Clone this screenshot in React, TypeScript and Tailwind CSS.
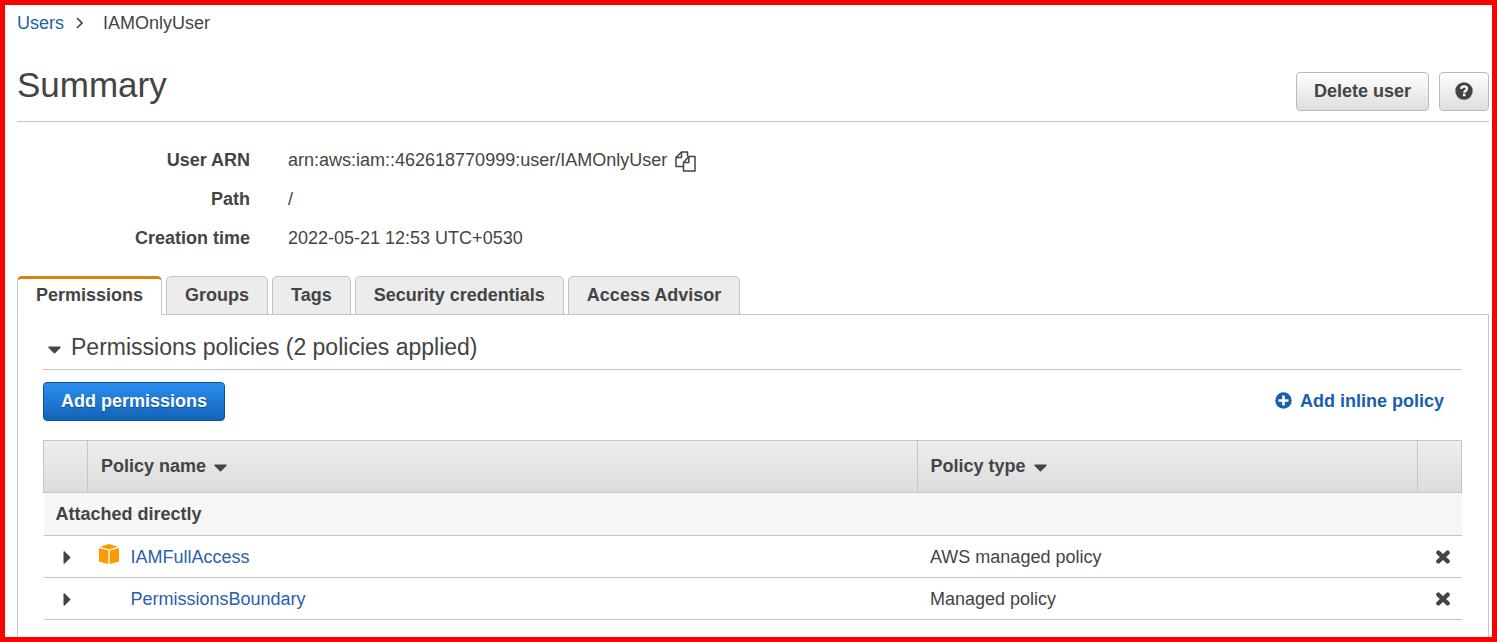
import { useState } from "react";

const TABS = ["Permissions", "Groups", "Tags", "Security credentials", "Access Advisor"];

const DETAILS = [
    { label: "User ARN", value: "arn:aws:iam::462618770999:user/IAMOnlyUser", copy: true },
    { label: "Path", value: "/" },
    { label: "Creation time", value: "2022-05-21 12:53 UTC+0530" },
];

const POLICIES = [
    { name: "IAMFullAccess", type: "AWS managed policy", aws: true },
    { name: "PermissionsBoundary", type: "Managed policy", aws: false },
];

function CaretDown() {
    return (
        <svg className="mt-[5px]" width="13" height="8" viewBox="0 0 13 8" fill="currentColor">
            <path d="M1 .5h11c.7 0 1 .7.5 1.2L7 7.2c-.3.3-.7.3-1 0L.5 1.7C0 1.2.3.5 1 .5z" />
        </svg>
    );
}

function CaretRight() {
    return (
        <svg width="8" height="13" viewBox="0 0 8 13" fill="currentColor">
            <path d="M.5 1v11c0 .7.7 1 1.2.5L7.2 7c.3-.3.3-.7 0-1L1.7.5C1.2 0 .5.3.5 1z" />
        </svg>
    );
}

function CopyIcon() {
    return (
        <svg width="21" height="21" viewBox="0 0 21 21" fill="none" stroke="currentColor" strokeWidth="1.5" strokeLinejoin="round">
            <path d="M8.5 15.5H1V6.5L6.5 1h6v4.5" />
            <path d="M6.5 1v5.500H1" />
            <path d="M8.5 11.5V20H20V5.5h-6.2z" fill="#fff" />
            <path d="M13.8 5.5v6H8.5" />
        </svg>
    );
}

function HelpIcon() {
    return (
        <svg width="18" height="18" viewBox="0 0 18 18">
            <circle cx="9" cy="9" r="8.7" fill="currentColor" />
            <path
                d="M6.1 6.9C6.4 5.2 7.5 4.4 9.1 4.4c1.6 0 2.8.9 2.8 2.3 0 2-2.6 2-2.6 4"
                fill="none"
                stroke="#fff"
                strokeWidth="2.4"
            />
            <rect x="8" y="11.7" width="2.5" height="2.5" fill="#fff" />
        </svg>
    );
}

function PlusIcon() {
    return (
        <svg width="17" height="17" viewBox="0 0 17 17">
            <circle cx="8.5" cy="8.5" r="8.2" fill="currentColor" />
            <path d="M8.5 3.5v10M3.5 8.5h10" stroke="#fff" strokeWidth="2.6" />
        </svg>
    );
}

function CubeIcon() {
    return (
        <svg width="20" height="20" viewBox="0 0 20 20" fill="#f90">
            <path d="M10 0l9 2.8L10 5.4 1 2.8z" />
            <path d="M0 4l9.3 2.6V20L0 17.4z" />
            <path d="M20 4l-9.3 2.6V20l9.3-2.6z" />
        </svg>
    );
}

function RemoveIcon() {
    return (
        <svg width="14" height="14" viewBox="0 0 14 14">
            <path d="M2.3 2.6l9.4 8.8M11.7 2.6l-9.4 8.8" stroke="currentColor" strokeWidth="4.2" strokeLinecap="round" />
        </svg>
    );
}

export default function App() {
    const [tab, setTab] = useState("Permissions");

    return (
        <div
            className="flex min-h-screen flex-col border-5 border-[#f00] bg-white pl-3 pr-[3px] text-[#444] text-[18px] leading-6"
            style={{ fontFamily: '"Liberation Sans", Arial, sans-serif' }}
        >
            <nav aria-label="Breadcrumb" className="flex items-center pt-[6px]">
                <a href="#users" className="text-[#1f5fae]">Users</a>
                <svg className="ml-3 mr-5" width="7" height="12" viewBox="0 0 7 12" fill="none" stroke="currentColor" strokeWidth="1.6">
                    <path d="M1 1l5 5-5 5" />
                </svg>
                <span>IAMOnlyUser</span>
            </nav>

            <header className="mt-[30px] flex items-end justify-between border-b border-[#c5c5c5] pb-[10px]">
                <h1 className="pb-[6px] text-[35px] leading-10">Summary</h1>
                <div className="flex gap-[10px]">
                    <button className="h-[39px] cursor-pointer rounded-[4px] border border-[#bbb] bg-linear-to-b from-white to-[#dedede] px-[17px] pb-[2px] font-bold">
                        Delete user
                    </button>
                    <button
                        aria-label="Help"
                        className="flex h-[39px] w-[50px] cursor-pointer items-center justify-center rounded-[4px] border border-[#bbb] bg-linear-to-b from-white to-[#dedede] pb-[2px]"
                    >
                        <HelpIcon />
                    </button>
                </div>
            </header>

            <dl className="mt-[26px] flex flex-col gap-[15px]">
                {DETAILS.map(({ label, value, copy }) => (
                    <div key={label} className="flex">
                        <dt className="w-[233px] shrink-0 text-right font-bold">{label}</dt>
                        <dd className="flex items-center pl-[38px]">
                            {value}
                            {copy && (
                                <button aria-label="Copy ARN" className="ml-2 cursor-pointer pt-[2px]">
                                    <CopyIcon />
                                </button>
                            )}
                        </dd>
                    </div>
                ))}
            </dl>

            <div role="tablist" className="relative z-10 -mb-px mt-[26px] flex gap-1">
                {TABS.map((name) => (
                    <button
                        key={name}
                        role="tab"
                        aria-selected={tab === name}
                        onClick={() => setTab(name)}
                        className={`h-[39px] cursor-pointer rounded-t-[5px] border border-[#c5c5c5] px-[18px] font-bold ${
                            tab === name
                                ? "border-t-3 border-b-white border-t-[#d5820f] bg-white pb-1"
                                : "bg-[#ececec] pb-[2px]"
                        }`}
                    >
                        {name}
                    </button>
                ))}
            </div>

            <main role="tabpanel" className="flex-1 border-x border-t border-[#c5c5c5] pb-2 pl-[25px] pr-[26px]">
                <h2 className="border-b border-[#c5c5c5] pb-[7px] pt-[17px] text-[23px] leading-[30px]">
                    <button className="flex cursor-pointer items-center gap-[10px] pl-[5px]">
                        <CaretDown />
                        Permissions policies (2 policies applied)
                    </button>
                </h2>

                <div className="flex items-center justify-between pb-[19px] pr-[18px] pt-3">
                    <button className="h-[39px] cursor-pointer rounded-[4px] border border-[#104f94] bg-linear-to-b from-[#2a8ef0] to-[#1464b8] px-[17px] pb-[2px] font-bold text-white text-shadow-[0_1px_1px_#104f94]">
                        Add permissions
                    </button>
                    <button className="flex cursor-pointer items-center gap-2 pb-[2px] font-bold text-[#1660ae]">
                        <PlusIcon />
                        Add inline policy
                    </button>
                </div>

                <table className="w-full table-fixed border-collapse text-left">
                    <colgroup>
                        <col className="w-[44px]" />
                        <col className="w-[58.5%]" />
                        <col />
                        <col className="w-[44px]" />
                    </colgroup>
                    <thead>
                        <tr className="h-[52px] bg-linear-to-b from-[#eee] to-[#dcdcdc]">
                            <th className="border border-[#c5c5c5]" />
                            {["Policy name", "Policy type"].map((heading) => (
                                <th key={heading} className="border border-[#c5c5c5] px-[13px] pb-[2px] pt-0">
                                    <button className="flex cursor-pointer items-center gap-2 font-bold">
                                        {heading}
                                        <CaretDown />
                                    </button>
                                </th>
                            ))}
                            <th className="border border-[#c5c5c5]" />
                        </tr>
                    </thead>
                    <tbody>
                        <tr className="h-[43px] border-b border-[#c5c5c5] bg-[#f6f6f6]">
                            <th colSpan={4} className="px-3 py-0">Attached directly</th>
                        </tr>
                        {POLICIES.map(({ name, type, aws }) => (
                            <tr key={name} className="h-[42px] border-b border-[#c5c5c5]">
                                <td className="p-0">
                                    <button aria-label={`Expand ${name}`} className="block cursor-pointer pl-[19px] pt-[2px]">
                                        <CaretRight />
                                    </button>
                                </td>
                                <td className="px-[11px] py-0">
                                    <div className="flex items-center gap-3">
                                        <span className="w-5 shrink-0 pb-[6px]">{aws && <CubeIcon />}</span>
                                        <a href={`#${name}`} className="text-[#2a5fae]">{name}</a>
                                    </div>
                                </td>
                                <td className="px-[13px] py-0">{type}</td>
                                <td className="p-0">
                                    <button aria-label={`Detach ${name}`} className="ml-auto mr-3 block cursor-pointer">
                                        <RemoveIcon />
                                    </button>
                                </td>
                            </tr>
                        ))}
                    </tbody>
                </table>
            </main>
        </div>
    );
}
